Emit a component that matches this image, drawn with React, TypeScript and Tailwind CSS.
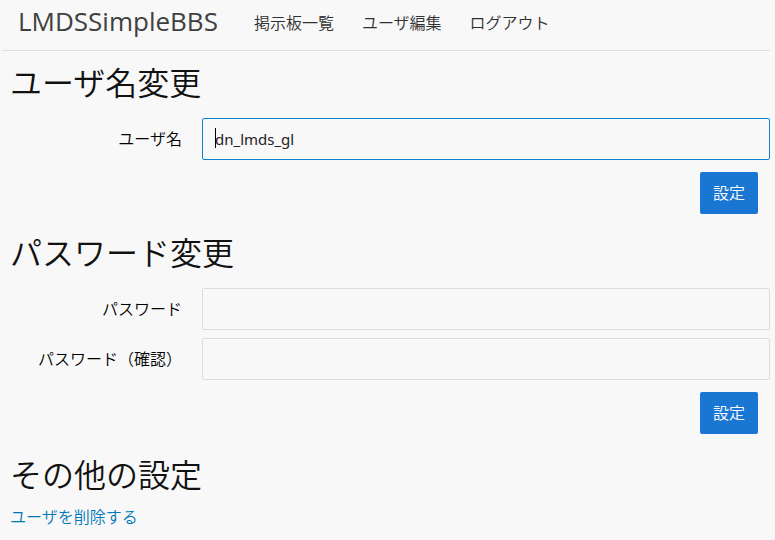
import { useState } from "react";

function Navbar() {
  return (
    <header className="mr-[5px] ml-0.5 flex h-[51px] items-center border-b border-[#dedede]">
      <a href="#top" className="ml-4 mb-2 font-['Open_Sans',sans-serif] text-[26px] leading-8 font-normal text-[#404040]">LMDSSimpleBBS</a>
      <nav className="ml-9 mb-1 flex gap-7 text-base text-[#303030]">
        <a href="#boards">掲示板一覧</a>
        <a href="#user">ユーザ編集</a>
        <a href="#logout">ログアウト</a>
      </nav>
    </header>
  );
}

function Heading({ children }: { children: string }) {
  return <h1 className="text-[32px] leading-10 text-[#111]">{children}</h1>;
}

function Field({ id, label, type, value, onChange, focused }: {
  id: string; label: string; type: string; value: string; onChange: (v: string) => void; focused?: boolean;
}) {
  const [untouched, setUntouched] = useState(Boolean(focused));
  return (
    <div className="flex items-center">
      <label htmlFor={id} className="w-[172px] shrink-0 text-right text-base text-black">{label}</label>
      <div className="relative ml-5 flex min-w-0 flex-1">
        <input
          id={id}
          type={type}
          value={value}
          autoFocus={focused}
          onFocus={(e) => e.target.setSelectionRange(0, 0)}
          onBlur={() => setUntouched(false)}
          onKeyDown={() => setUntouched(false)}
          onPointerDown={() => setUntouched(false)}
          onChange={(e) => onChange(e.target.value)}
          className="h-[42px] w-full rounded-xs border border-[#dcdcdc] px-3 text-[15px] font-normal text-[#222] outline-none focus:border-[#0a84cc]"
        />
        {untouched && <span aria-hidden="true" className="pointer-events-none absolute top-2.5 left-[13px] h-5 w-px bg-black" />}
      </div>
    </div>
  );
}

function Submit() {
  return (
    <div className="mt-3 mr-3 flex justify-end">
      <button type="submit" className="h-[42px] w-[58px] rounded-xs bg-[#1976d2] text-base text-white">設定</button>
    </div>
  );
}

export default function App() {
  const [name, setName] = useState("dn_lmds_gl");
  const [password, setPassword] = useState("");
  const [confirm, setConfirm] = useState("");
  return (
    <div className="min-h-screen bg-[#f8f8f8] font-['Noto_Sans','Noto_Sans_CJK_JP',sans-serif] font-[350]">
      <Navbar />
      <main className="pt-3 pr-[5px] pl-2.5">
        <Heading>ユーザ名変更</Heading>
        <form className="mt-[15px]" onSubmit={(e) => e.preventDefault()}>
          <Field id="name" label="ユーザ名" type="text" value={name} onChange={setName} focused />
          <Submit />
        </form>
        <div className="mt-[19px]"><Heading>パスワード変更</Heading></div>
        <form className="mt-[15px]" onSubmit={(e) => e.preventDefault()}>
          <div className="flex flex-col gap-2">
            <Field id="password" label="パスワード" type="password" value={password} onChange={setPassword} />
            <Field id="confirm" label="パスワード（確認）" type="password" value={confirm} onChange={setConfirm} />
          </div>
          <Submit />
        </form>
        <div className="mt-[21px]"><Heading>その他の設定</Heading></div>
        <a href="#delete" className="mt-[10px] block w-fit text-base text-[#0078b8]">ユーザを削除する</a>
      </main>
    </div>
  );
}
